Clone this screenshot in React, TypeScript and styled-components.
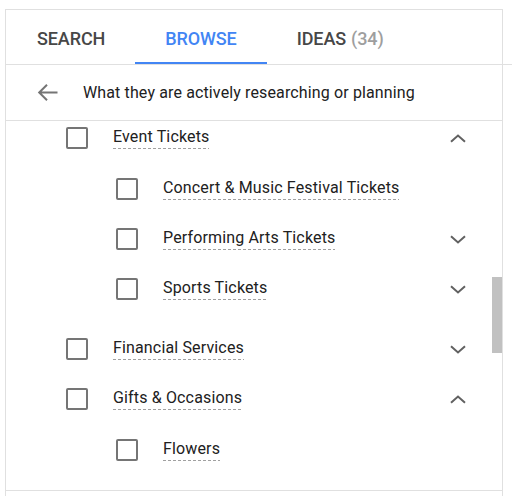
import React from "react";
import styled, { createGlobalStyle } from "styled-components";

const GlobalStyle = createGlobalStyle`
  html, body { margin: 0; padding: 0; background: #ffffff; }
  body { font-family: Roboto, "Noto Sans", Arial, sans-serif; -webkit-font-smoothing: antialiased; }
  * { box-sizing: border-box; }
`;

const Page = styled.div`
  display: flex;
  align-items: stretch;
  height: 496px;
  padding: 9px 0 0 5px;
  overflow: hidden;
`;

const Panel = styled.div`
  width: 498px;
  flex: none;
  display: flex;
  flex-direction: column;
  border: 1px solid #e0e0e0;
  border-bottom: none;
`;

const SideStub = styled.div`
  flex: 1;
  margin-top: 55px;
  border-top: 1px solid #e0e0e0;
`;

const TabBar = styled.div`
  height: 55px;
  display: flex;
  border-bottom: 1px solid #e0e0e0;
`;

const Tab = styled.div<{ $active?: boolean }>`
  position: relative;
  display: flex;
  align-items: center;
  padding: 2px 30px 0;
  font-size: 18px;
  font-weight: 500;
  letter-spacing: -0.1px;
  color: ${(p) => (p.$active ? "#4285f4" : "#474747")};
  white-space: nowrap;
  &:first-child {
    padding-left: 31px;
  }
  &::after {
    content: "";
    display: ${(p) => (p.$active ? "block" : "none")};
    position: absolute;
    left: 0;
    right: 0;
    bottom: 0;
    height: 2px;
    background: #4285f4;
  }
`;

const Count = styled.span`
  color: #9e9e9e;
  margin-left: 5px;
`;

const Header = styled.div`
  height: 56px;
  display: flex;
  align-items: center;
  padding-left: 31px;
  border-bottom: 1px solid #e0e0e0;
`;

const HeaderText = styled.span`
  margin-left: 25px;
  font-size: 16px;
  letter-spacing: 0.13px;
  color: #212121;
`;

const Viewport = styled.div`
  position: relative;
  height: 370px;
  overflow: hidden;
  border-bottom: 1px solid #e0e0e0;
`;

const List = styled.div`
  margin-top: -8px;
`;

const Group = styled.div`
  padding: 1px 0 10px;
`;

const Row = styled.div<{ $level: number }>`
  height: 50px;
  display: flex;
  align-items: center;
  padding-left: ${(p) => (p.$level === 1 ? 60 : 110)}px;
  padding-right: 36px;
`;

const Box = styled.span`
  width: 22px;
  height: 22px;
  flex: none;
  border: 2px solid #757575;
  border-radius: 2px;
`;

const Label = styled.span`
  margin-left: 25px;
  font-size: 16px;
  line-height: 20px;
  padding-bottom: 2px;
  letter-spacing: 0.15px;
  color: #212121;
  white-space: nowrap;
  background-image: linear-gradient(to right, #a0a0a0 0 3px, transparent 3px 5px);
  background-size: 5px 1px;
  background-repeat: repeat-x;
  background-position: left bottom;
`;

const Spacer = styled.span`
  flex: 1;
`;

const Thumb = styled.div`
  position: absolute;
  right: 0;
  top: 156px;
  width: 10px;
  height: 76px;
  background: #c1c1c1;
`;

const Footer = styled.div`
  flex: 1;
`;

const BackArrow = () => (
  <svg width="21" height="19" viewBox="0 0 21 19" fill="none">
    <path d="M20.5 9.5H2.2M10 1.7L2.2 9.5L10 17.3" stroke="#757575" strokeWidth="2" />
  </svg>
);

const Chevron = ({ up }: { up: boolean }) => (
  <svg width="16" height="9" viewBox="0 0 16 9" fill="none">
    <path
      d={up ? "M1 7.8L8 1.5L15 7.8" : "M1 1.2L8 7.5L15 1.2"}
      stroke="#616161"
      strokeWidth="2"
    />
  </svg>
);

type Item = { label: string; level: number; chevron?: "up" | "down" };

const ItemRow = ({ label, level, chevron }: Item) => (
  <Row $level={level}>
    <Box />
    <Label>{label}</Label>
    <Spacer />
    {chevron && <Chevron up={chevron === "up"} />}
  </Row>
);

export default function App() {
  return (
    <>
      <GlobalStyle />
      <Page>
        <Panel>
          <TabBar>
            <Tab>SEARCH</Tab>
            <Tab $active>BROWSE</Tab>
            <Tab>
              IDEAS<Count>(34)</Count>
            </Tab>
          </TabBar>
          <Header>
            <BackArrow />
            <HeaderText>What they are actively researching or planning</HeaderText>
          </Header>
          <Viewport>
            <List>
              <ItemRow label="Event Tickets" level={1} chevron="up" />
              <Group>
                <ItemRow label="Concert & Music Festival Tickets" level={2} />
                <ItemRow label="Performing Arts Tickets" level={2} chevron="down" />
                <ItemRow label="Sports Tickets" level={2} chevron="down" />
              </Group>
              <ItemRow label="Financial Services" level={1} chevron="down" />
              <ItemRow label="Gifts & Occasions" level={1} chevron="up" />
              <Group>
                <ItemRow label="Flowers" level={2} />
              </Group>
            </List>
            <Thumb />
          </Viewport>
          <Footer />
        </Panel>
        <SideStub />
      </Page>
    </>
  );
}
